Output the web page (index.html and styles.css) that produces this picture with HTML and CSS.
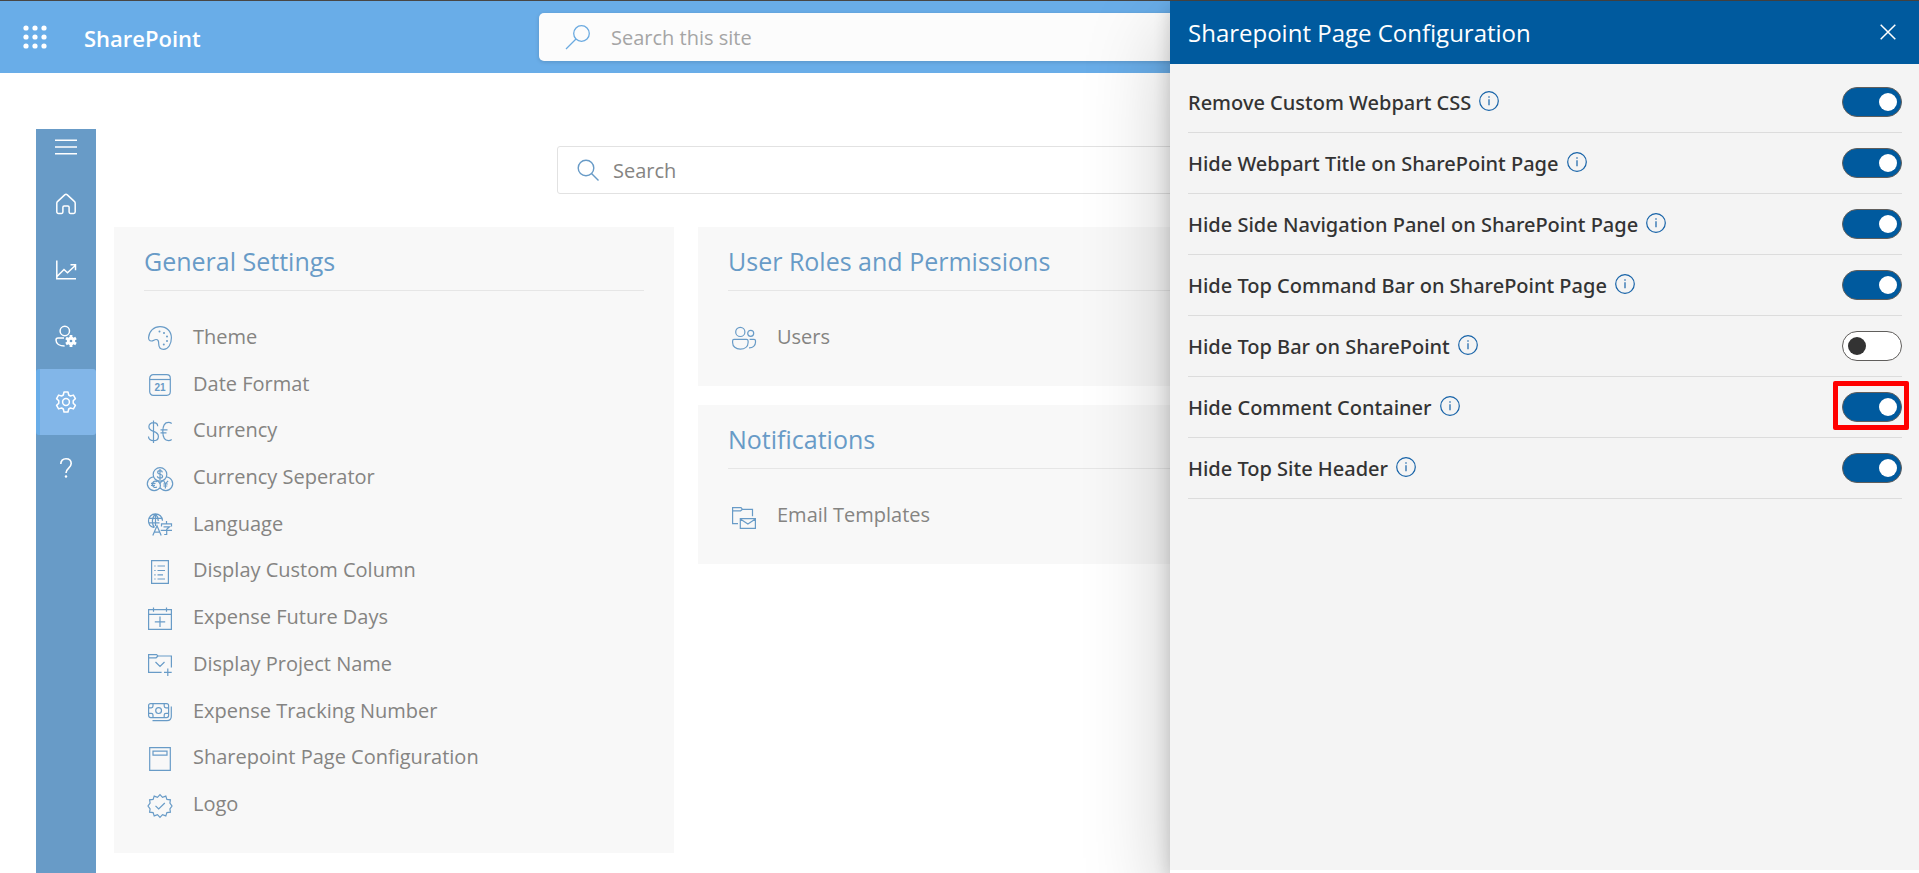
FILE: index.html
```html
<!DOCTYPE html>
<html lang="en">
<head>
<meta charset="utf-8">
<title>Sharepoint Page Configuration</title>
<link rel="stylesheet" href="styles.css">
</head>
<body>
<div class="app">
  <header class="suite-bar">
    <button class="waffle" type="button" aria-label="App launcher">
      <svg width="24" height="24" viewBox="0 0 24 24" fill="currentColor"><circle cx="3" cy="3" r="2.6"/><circle cx="12" cy="3" r="2.6"/><circle cx="21" cy="3" r="2.6"/><circle cx="3" cy="12" r="2.6"/><circle cx="12" cy="12" r="2.6"/><circle cx="21" cy="12" r="2.6"/><circle cx="3" cy="21" r="2.6"/><circle cx="12" cy="21" r="2.6"/><circle cx="21" cy="21" r="2.6"/></svg>
    </button>
    <a class="brand" href="#">SharePoint</a>
    <div class="site-search">
      <svg width="26" height="26" viewBox="0 0 26 26" fill="none" stroke="currentColor" stroke-width="1.3"><circle cx="16.5" cy="9.5" r="7.8"/><path d="M11 15 1 25"/></svg>
      <input type="search" aria-label="Search this site" placeholder="Search this site">
    </div>
  </header>
  <div class="workspace">
    <nav class="side-nav" aria-label="Main">
      <button class="menu" type="button" aria-label="Menu"><svg width="22" height="16" viewBox="0 0 22 16" stroke="currentColor" stroke-width="1.4"><path d="M0 1.3h22M0 8h22M0 14.7h22"/></svg></button>
      <a class="nav-item" href="#" aria-label="Home"><svg width="22" height="22" viewBox="0 0 22 22" fill="none" stroke="currentColor" stroke-width="1.5" stroke-linejoin="round"><path d="M1.8 10.2c0-.8.3-1.300.9-1.800L9.700 1.900a2 2 0 0 1 2.600 0l7 6.500c.6.500.9 1 .9 1.800v8.600c0 1-.7 1.600-1.600 1.600h-3.200c-.8 0-1.300-.5-1.300-1.300v-4.900c0-.9-.5-1.300-1.300-1.300h-3.600c-.8 0-1.300.4-1.300 1.300v4.900c0 .8-.5 1.300-1.300 1.300H3.400c-.9 0-1.600-.6-1.600-1.600z"/></svg></a>
      <a class="nav-item" href="#" aria-label="Reports"><svg width="22" height="22" viewBox="0 0 22 22" fill="none" stroke="currentColor" stroke-width="1.5"><path d="M1.800 1.500v18.200H21M2 17.500l7-7 3.500 3.200 8-7.500M15.500 5.800h5v5.500"/></svg></a>
      <a class="nav-item" href="#" aria-label="User settings"><svg width="22" height="22" viewBox="0 0 22 22" fill="none" stroke="currentColor" stroke-width="1.500"><circle cx="9.800" cy="6" r="4.700"/><path d="M9 13H3C1.700 13 1 13.700 1 15c0 3.700 3.600 6 8.600 6"/><path d="M16 10v12M11 13l10 6M21 13l-10 6" stroke-width="2.800"/><circle cx="16" cy="16" r="4.200" fill="currentColor" stroke="none"/><circle class="gear-hole" cx="16" cy="16" r="1.300" stroke="none"/></svg></a>
      <a class="nav-item active" href="#" aria-label="Settings" aria-current="page"><svg width="22" height="22" viewBox="0 0 22 22" fill="none" stroke="currentColor" stroke-width="1.500" stroke-linejoin="round"><circle cx="11" cy="11" r="3.400"/><path d="M9 1h4l.7 3 1.700 1 3-.9 2 3.500L18.200 9.800v2.400l2.200 2.200-2 3.500-3-.9-1.700 1L13 21H9l-.7-3-1.700-1-3 .9-2-3.500 2.200-2.200V9.800L1.600 7.600l2-3.500 3 .9 1.700-1z"/></svg></a>
      <a class="nav-item" href="#" aria-label="Help"><svg width="22" height="22" viewBox="0 0 22 22" fill="none" stroke="currentColor" stroke-width="1.600"><path d="M5.800 7c0-3.300 2-5.200 5.200-5.200s5.200 1.900 5.200 4.800c0 4.400-5.200 4.700-5.200 9.400"/><circle cx="11" cy="19.500" r="1.200" fill="currentColor" stroke="none"/></svg></a>
    </nav>
    <main class="content">
      <div class="filter">
        <svg width="22" height="22" viewBox="0 0 22 22" fill="none" stroke="currentColor" stroke-width="1.400"><circle cx="9" cy="9" r="7.800"/><path d="m14.500 14.500 7 7"/></svg>
        <input type="search" aria-label="Search settings" placeholder="Search">
      </div>
      <div class="columns">
        <section class="card">
          <h2>General Settings</h2>
          <ul>
            <li><a href="#"><svg viewBox="0 0 24 24"><path d="M.6 11.500C1 5 6 .6 12 .6c6.500 0 11.400 4.600 11.400 11.200 0 6.400-3.200 11.600-7.800 11.600-3.400 0-4.900-2.400-4.900-5.600 0-2.800-.5-4.300-2.700-4.300-1.700 0-2.600 1.500-4.600 1.500C1.300 15 .5 13.500.6 11.500z"/><g class="solid"><circle cx="11.500" cy="5.500" r="1"/><circle cx="16" cy="7" r="1"/><circle cx="19" cy="10.500" r="1"/><circle cx="19" cy="15" r="1"/><circle cx="15.800" cy="18.500" r="1"/></g></svg>Theme</a></li>
            <li><a href="#"><svg viewBox="0 0 24 24"><rect x="1.700" y="1.700" width="20.600" height="20.600" rx="3.500"/><path d="M1.700 6.500h20.600"/><text class="day" x="12" y="17.500">21</text></svg>Date Format</a></li>
            <li><a href="#"><svg viewBox="0 0 24 24"><path d="M9.700 6.200C9.700 3.800 8 2.600 5.500 2.600S.9 4.100.9 6.700c0 2.900 2.300 3.900 4.600 4.700 2.600.9 4.900 2 4.900 5 0 2.800-2 4.300-5 4.300-3 0-4.900-1.600-4.900-4.200M5.500.5v22.500M23.700 3.500c-1-.8-2-1.100-3.200-1.100-4 0-5.700 3.600-5.700 9.200s1.700 9 5.700 9c1.200 0 2.200-.3 3.200-1.100M12.500 9.800h7M12.500 12.800h6"/></svg>Currency</a></li>
            <li><a href="#"><svg viewBox="0 0 24 24"><circle cx="12" cy="7.400" r="6.800"/><path d="M5.700 9.800a6.900 6.900 0 1 0 6.300 10.700M18.300 9.800A6.900 6.900 0 1 1 12 20.500M9.500 13.800c2.600 2 3.500 4.300 2.500 6.700M14.500 13.800c-1.300.8-2.100 1.800-2.500 3"/><path d="M14.400 5.300c-.2-1.200-1-1.700-2.400-1.700-1.300 0-2.300.6-2.300 1.800 0 2.700 4.900 1 4.900 3.900 0 1.300-1.100 1.900-2.600 1.900s-2.500-.6-2.600-1.900M12 2v11M9 14.600c-2.600-1.300-4.500.2-4.500 2.700s1.900 4 4.400 2.700M3 16.400h4.500M3 18.300h4M15.600 13.800l1.800 3 2.700-3M17.400 16.800v4.700M15.300 17h4.500M15.300 19h4"/></svg>Currency Seperator</a></li>
            <li><a href="#"><svg viewBox="0 0 24 24"><path d="M5.500 14.300C2.500 13.500.5 11 .5 8a7 7 0 0 1 14-.3M7.500 1C3.500 4.500 3.500 11 6.500 14.500M7.500 1c1.700 1.600 2.700 4 2.800 7M7.500 1v12M1.300 5.300h12.500M1 9.800h10.500"/><path d="M4.800 22.500 9 12.800l4.200 9.700M6.200 19.200h5.600M18.500 8v2.500M13.500 13.500v-2.700h10v2.700M15.500 13.800h6l-2.800 2.500v5.200h-2.500M12.700 17.300h11.300"/></svg>Language</a></li>
            <li><a href="#"><svg viewBox="0 0 24 24"><path d="M3.600.6h16.800v22.800H3.600zM9.500 6h7.500M9.500 10.500h7.500M9.500 14.800h5.500M9.500 19h7.500M6.300 6h1.300M6.300 10.500h1.300M6.300 14.800h1.300M6.300 19h1.300"/></svg>Display Custom Column</a></li>
            <li><a href="#"><svg viewBox="0 0 24 24"><path d="M.6 2.600h22.800v19.800H.6zM.6 7.300h22.800M5.500.5v4.300M18.500.5v4.300M12 9.500v10.500M6.800 14.800h10.400"/></svg>Expense Future Days</a></li>
            <li><a href="#"><svg viewBox="0 0 24 24"><path d="M23.400 14.500V3H10L8.500 1.600H.6v17.800h13M.6 4.800h7.500L10 3M7.500 9l4.500 4.500L16.500 9M19.800 15.500v7.500M16 19.300h7.700"/></svg>Display Project Name</a></li>
            <li><a href="#"><svg viewBox="0 0 24 24"><rect x=".6" y="3.600" width="20" height="14" rx="2"/><circle cx="10.600" cy="10.600" r="2.900"/><path d="M5 3.600v2.500c0 1.200-.5 1.700-1.700 1.700H.6M16.200 3.600v2.500c0 1.200.5 1.700 1.700 1.700h2.700M5 17.600v-2.500c0-1.200-.5-1.700-1.700-1.700H.6M16.200 17.600v-2.500c0-1.200.5-1.700 1.700-1.700h2.700M23.300 6.500v9.700c0 2.600-1.700 4.400-4.400 4.400H4.500"/></svg>Expense Tracking Number</a></li>
            <li><a href="#"><svg viewBox="0 0 24 24"><path d="M1.700.6h20.600v22.800H1.700zM5 4.200h14v4H5z"/></svg>Sharepoint Page Configuration</a></li>
            <li><a href="#"><svg viewBox="0 0 24 24"><path d="m12 .7 2.500 2.600 3.300-1.200 1.100 3.300 3.500.4-.5 3.400 2.100 2.800-2.100 2.800.5 3.400-3.500.4-1.100 3.300-3.300-1.200-2.500 2.600-2.500-2.600-3.300 1.200-1.100-3.300-3.500-.4.500-3.400L0 12l2.100-2.800-.5-3.400 3.500-.4 1.100-3.300 3.300 1.200zM7.500 11.800l3.200 3.200L16.800 9"/></svg>Logo</a></li>
          </ul>
        </section>
        <div class="stack">
          <section class="card">
            <h2>User Roles and Permissions</h2>
            <ul>
              <li><a href="#"><svg viewBox="0 0 24 24"><circle cx="8.300" cy="4.900" r="4.600"/><circle cx="18.700" cy="6.300" r="3"/><path d="M2 12.300h12.500c1 0 1.600.6 1.600 1.600v1.500c0 4.200-3.300 6.700-7.800 6.700S.6 19.600.6 15.400v-1.500c0-1 .5-1.600 1.400-1.600zM17.600 12.300h4.400c1 0 1.500.5 1.500 1.500v1.500c0 3.500-2.600 5.600-6.500 5.500"/></svg>Users</a></li>
            </ul>
          </section>
          <section class="card">
            <h2>Notifications</h2>
            <ul>
              <li><a href="#"><svg viewBox="0 0 24 24"><path d="M6 18.600H.6V2.600H9l1.500 1.700h10v7M.6 5.800h8l1.900-1.500M8.300 13.600h15.100v9.800H8.300zM8.300 14l7.600 5 7.500-5"/></svg>Email Templates</a></li>
            </ul>
          </section>
        </div>
      </div>
    </main>
  </div>
</div>

<aside class="panel" role="dialog" aria-labelledby="panel-title">
  <header class="panel-head">
    <h1 id="panel-title">Sharepoint Page Configuration</h1>
    <button type="button" aria-label="Close"><svg width="16" height="16" viewBox="0 0 16 16" stroke="currentColor" stroke-width="1.500"><path d="m.7.7 14.600 14.600M15.300.7.7 15.300"/></svg></button>
  </header>
  <div class="options">
    <div class="option"><label for="o1">Remove Custom Webpart CSS</label><button class="info" type="button" aria-label="Info"><svg viewBox="0 0 20 20"><circle cx="10" cy="10" r="9.300"/><path d="M10 8.300v6M10 5.200v1.500"/></svg></button><span class="switch"><input id="o1" type="checkbox" role="switch" checked></span></div>
    <div class="option"><label for="o2">Hide Webpart Title on SharePoint Page</label><button class="info" type="button" aria-label="Info"><svg viewBox="0 0 20 20"><circle cx="10" cy="10" r="9.300"/><path d="M10 8.300v6M10 5.200v1.500"/></svg></button><span class="switch"><input id="o2" type="checkbox" role="switch" checked></span></div>
    <div class="option"><label for="o3">Hide Side Navigation Panel on SharePoint Page</label><button class="info" type="button" aria-label="Info"><svg viewBox="0 0 20 20"><circle cx="10" cy="10" r="9.300"/><path d="M10 8.300v6M10 5.200v1.500"/></svg></button><span class="switch"><input id="o3" type="checkbox" role="switch" checked></span></div>
    <div class="option"><label for="o4">Hide Top Command Bar on SharePoint Page</label><button class="info" type="button" aria-label="Info"><svg viewBox="0 0 20 20"><circle cx="10" cy="10" r="9.300"/><path d="M10 8.300v6M10 5.200v1.500"/></svg></button><span class="switch"><input id="o4" type="checkbox" role="switch" checked></span></div>
    <div class="option"><label for="o5">Hide Top Bar on SharePoint</label><button class="info" type="button" aria-label="Info"><svg viewBox="0 0 20 20"><circle cx="10" cy="10" r="9.300"/><path d="M10 8.300v6M10 5.200v1.500"/></svg></button><span class="switch"><input id="o5" type="checkbox" role="switch"></span></div>
    <div class="option"><label for="o6">Hide Comment Container</label><button class="info" type="button" aria-label="Info"><svg viewBox="0 0 20 20"><circle cx="10" cy="10" r="9.300"/><path d="M10 8.300v6M10 5.200v1.500"/></svg></button><span class="switch marked"><input id="o6" type="checkbox" role="switch" checked></span></div>
    <div class="option"><label for="o7">Hide Top Site Header</label><button class="info" type="button" aria-label="Info"><svg viewBox="0 0 20 20"><circle cx="10" cy="10" r="9.300"/><path d="M10 8.300v6M10 5.200v1.500"/></svg></button><span class="switch"><input id="o7" type="checkbox" role="switch" checked></span></div>
  </div>
</aside>
</body>
</html>
```
FILE: styles.css
```css
* { box-sizing: border-box; }

body {
  margin: 0;
  overflow: hidden;
  border-top: 1px solid #484644;
  background: #fff;
  color: #858482;
  font-family: "Open Sans", "Noto Sans", sans-serif;
  font-size: 20px;
}

button { padding: 0; border: 0; background: none; color: inherit; font: inherit; }
a { color: inherit; text-decoration: none; }
svg { display: block; flex: none; }
input[type="search"] {
  flex: 1;
  min-width: 0;
  padding: 0;
  border: 0;
  outline: 0;
  background: none;
  font: inherit;
}

.app { display: flex; flex-direction: column; height: calc(100vh - 1px); min-height: 780px; }

/* Suite bar */
.suite-bar {
  display: flex;
  align-items: center;
  height: 72px;
  background: #69ade8;
  color: #fff;
}
.waffle { margin-left: 23px; }
.brand { flex: 1; margin-left: 37px; padding-top: 2px; font-size: 22px; font-weight: 600; }
.site-search {
  display: flex;
  align-items: center;
  gap: 20px;
  width: 841px;
  height: 48px;
  margin-right: 539px;
  padding: 0 26px;
  border-radius: 5px;
  background: #fcfcfc;
  box-shadow: 0 1px 4px rgba(0, 0, 0, .15);
  color: #6baae0;
}
.site-search input { padding-top: 1px; }
.site-search input::placeholder { color: #a5a5a5; }

/* Workspace */
.workspace { display: flex; flex: 1; min-height: 0; padding: 56px 77px 0 36px; gap: 18px; }
.side-nav { flex: none; width: 60px; background: #689bc7; color: #fff; }
.menu { display: flex; justify-content: center; align-items: center; width: 60px; height: 42px; padding-bottom: 6px; }
.nav-item { display: flex; justify-content: center; align-items: center; height: 66px; }
.nav-item.active { border-left: 4px solid #69ade8; border-radius: 3px; padding-right: 4px; background: #82b6e8; }
.gear-hole { fill: #689bc7; }

.content { display: flex; flex-direction: column; flex: 1; min-width: 0; padding: 17px 0 20px; }
.filter {
  display: flex;
  align-items: center;
  align-self: center;
  gap: 14px;
  width: 842px;
  height: 48px;
  flex: none;
  margin-bottom: 33px;
  padding: 0 19px;
  border: 1px solid #e2e2e2;
  border-radius: 3px;
  color: #689bc7;
}
.filter input { padding-top: 1px; }
.filter input::placeholder { color: #858482; }

.columns { display: grid; grid-template-columns: repeat(3, 1fr); gap: 24px; flex: 1; min-height: 0; }
.stack { display: flex; flex-direction: column; gap: 19px; align-self: start; }
.card { display: flex; flex-direction: column; padding: 20px 30px 26px; background: #f8f8f8; }
.card h2 {
  margin: 0 0 22px;
  padding-bottom: 15px;
  border-bottom: 1px solid #e6e6e6;
  color: #689bc7;
  font-size: 25px;
  font-weight: 400;
  line-height: 28px;
}
.card ul { display: grid; grid-auto-rows: minmax(44px, 1fr); flex: 1; margin: 0; padding: 0; list-style: none; }
.stack .card ul { grid-auto-rows: 47px; }
.card a { display: flex; align-items: center; gap: 21px; height: 100%; padding-left: 4px; }
.card svg { width: 24px; height: 24px; margin-top: 4px; fill: none; stroke: #689bc7; stroke-width: 1.2; overflow: visible; }
.card svg .solid { fill: #689bc7; stroke: none; }
.card svg .day { fill: #689bc7; stroke: none; font: 700 10px "Liberation Sans", sans-serif; text-anchor: middle; }

/* Configuration panel */
.panel {
  position: fixed;
  top: 1px;
  right: 0;
  bottom: 0;
  display: flex;
  flex-direction: column;
  width: 749px;
  max-width: 100%;
  padding-bottom: 3px;
  background: #fff;
  box-shadow: 0 32px 80px rgba(0, 0, 0, .22), 0 6px 18px rgba(0, 0, 0, .18);
  color: #333;
}
.panel-head {
  display: flex;
  align-items: center;
  justify-content: space-between;
  height: 63px;
  padding: 0 23px 1px 18px;
  background: #005a9e;
  color: #fff;
}
.panel-head h1 { margin: 0; font-size: 24px; font-weight: 400; }
.options { flex: 1; padding: 8px 17px 0 18px; background: #f4f4f4; }
.option {
  display: flex;
  align-items: center;
  height: 61px;
  border-bottom: 1px solid #dcdcdc;
  font-family: "Noto Sans", "Open Sans", sans-serif;
  font-weight: 500;
}
.info { margin: 0 auto 2px 8px; }
.info svg { width: 20px; height: 20px; fill: none; stroke: #1763a8; stroke-width: 1.2; }
.switch { position: relative; display: flex; }
.switch input {
  display: flex;
  align-items: center;
  width: 60px;
  height: 30px;
  margin: 0;
  padding: 0 4px 0 5px;
  border: 1px solid #605e5c;
  border-radius: 15px;
  background: #fff;
  appearance: none;
}
.switch input::before { content: ""; width: 18px; height: 18px; border-radius: 50%; background: #333; }
.switch input:checked { justify-content: flex-end; background: #005a9e; }
.switch input:checked::before { background: #fff; }
.switch.marked::after {
  content: "";
  position: absolute;
  inset: -11px -7px -8px -9px;
  border: 5px solid #f00;
  border-radius: 2px;
  pointer-events: none;
}
```
